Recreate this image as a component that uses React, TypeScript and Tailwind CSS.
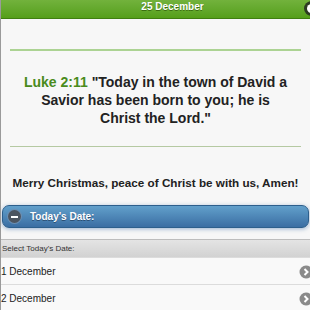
import React from 'react';

const ChevronCircle: React.FC<{ className?: string }> = ({ className }) => (
  <svg width="14" height="14" viewBox="0 0 14 14" className={className}>
    <circle cx="7" cy="7" r="6.5" fill="#8a8a8a" />
    <path d="M5.5 4 L8.5 7 L5.5 10" stroke="#fff" strokeWidth="2" fill="none" />
  </svg>
);

const App: React.FC = () => {
  const days = ['1 December', '2 December', '3 December'];

  return (
    <div className="w-[310px] h-[310px] overflow-hidden bg-[#f7f7f7] border-l border-[#9a9a9a] font-['Liberation_Sans',Arial,sans-serif] text-[#222]">
      {/* Header */}
      <div className="relative h-[19px] bg-gradient-to-b from-[#72b23c] to-[#559f19] border-b border-[#3f7f10] flex items-start justify-center pl-[34px] pt-[1px]">
        <span className="text-white font-bold text-[10px] leading-[11px] [text-shadow:0_1px_0_#3a6e10]">25 December</span>
        <div className="absolute right-[-9px] top-[1px] w-[15px] h-[15px] rounded-full bg-[#2d3b22] flex items-center justify-center">
          <div className="w-[9px] h-[9px] rounded-full bg-white" />
        </div>
      </div>

      {/* Content */}
      <div className="px-[9px]">
        <div className="mt-[30px] h-[2px] bg-[#acd393]" />
        <p className="mt-[22px] text-center text-[14px] leading-[18px] font-bold px-[11px]">
          <span className="text-[#4a8b1c]">Luke 2:11</span> "Today in the town of David a Savior has been born to you; he is Christ the Lord."
        </p>
        <div className="mt-[19px] h-px bg-[#b5c9a2]" />
        <p className="mt-[28px] text-center text-[11.7px] leading-[16px] font-bold whitespace-nowrap">
          Merry Christmas, peace of Christ be with us, Amen!
        </p>
      </div>

      {/* Collapsible */}
      <div className="mt-[14px] px-px">
        <div className="h-[23px] rounded-[7px] border border-[#2d5f8c] bg-gradient-to-b from-[#62a0cb] to-[#3b6ea3] shadow-[0_1px_4px_rgba(60,110,170,0.5)] flex items-center pl-[5px] gap-[9px]">
          <div className="w-[13px] h-[13px] rounded-full bg-[#4c5560] flex items-center justify-center ring-1 ring-[#6b8fb3]">
            <div className="w-[7px] h-[2px] bg-white" />
          </div>
          <span className="text-white font-bold text-[10px] [text-shadow:0_1px_0_#2a4f75]">Today's Date:</span>
        </div>
      </div>

      <div className="mt-[11px] border-t border-[#bdbdbd] h-[18px] bg-gradient-to-b from-[#e4e4e4] to-[#d2d2d2] flex items-center pl-px text-[8px] text-[#333]">
        Select Today's Date:
      </div>
      {days.map(d => (
        <div key={d} className="relative h-[27px] border-t border-[#dcdcdc] bg-[#f9f9f9] flex items-center text-[10px] text-[#222]">
          {d}
          <ChevronCircle className="absolute right-[-3px] top-[7px]" />
        </div>
      ))}
    </div>
  );
};

export default App;
